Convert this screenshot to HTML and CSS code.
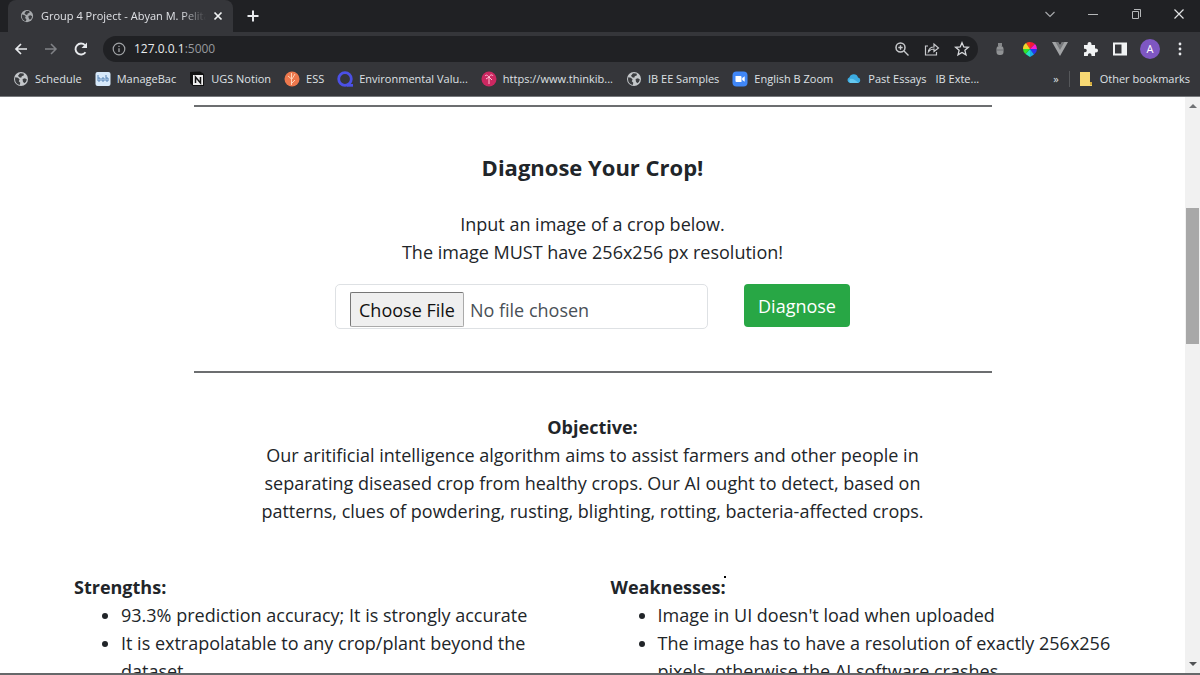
FILE: index.html
```html
<!DOCTYPE html>
<html lang="en">
<head>
<meta charset="utf-8">
<title>Group 4 Project</title>
<link rel="stylesheet" href="styles.css">
</head>
<body>
<svg class="defs" aria-hidden="true">
  <symbol id="globe" viewBox="0 0 16 16"><circle cx="8" cy="8" r="7" fill="#c4c7ca"/><path d="M2.3 6.2 5 6.8l1.6 1.6-.8 1.8 1.5 1.6-.5 2.3C3.8 13.5 2 11 2 8zM7 2.2l3.5.2.5 1.8-2.2 1-.6 1.6-2-.5-1.2-1.5zM9.6 8l2.3-.8 2 1.2-1 2.6-1.7 1.2-1.3-1.8z" fill="#3b3d40"/></symbol>
</svg>
<header class="chrome">
  <div class="tabstrip">
    <div class="tab">
      <svg class="icon dim"><use href="#globe"/></svg>
      <span class="tab-title">Group 4 Project - Abyan M. Pelita</span>
      <button class="plain" aria-label="Close tab"><svg viewBox="0 0 10 10" width="10" height="10"><path d="m1.5 1.5 7 7m0-7-7 7" stroke="#f1f3f4" stroke-width="1.7"/></svg></button>
    </div>
    <button class="plain new-tab" aria-label="New tab"><svg viewBox="0 0 12 12" width="12" height="12"><path d="M6 .5v11M.5 6h11" stroke="#e8eaed" stroke-width="2"/></svg></button>
    <div class="window-controls">
      <button class="plain" aria-label="Search tabs"><svg viewBox="0 0 12 12" width="12" height="12"><path d="m1.5 4 4.500 4.500L10.500 4" fill="none" stroke="#a6a8ab" stroke-width="1.200"/></svg></button>
      <button class="plain" aria-label="Minimize"><svg viewBox="0 0 12 12" width="12" height="12"><path d="M1 6.500h10" stroke="#b5b7b9"/></svg></button>
      <button class="plain" aria-label="Restore"><svg viewBox="0 0 12 12" width="12" height="12"><path d="M2.500 3.500h6v7h-6zM4 1.500h6.500V9" fill="none" stroke="#b5b7b9"/></svg></button>
      <button class="plain" aria-label="Close"><svg viewBox="0 0 12 12" width="12" height="12"><path d="m1.500 1.500 9 9m0-9-9 9" stroke="#e0e2e4" stroke-width="1.200"/></svg></button>
    </div>
  </div>
  <div class="toolbar">
    <button class="plain" aria-label="Back"><svg class="icon" viewBox="0 0 16 16"><path d="M14 8H3m5-5L3 8l5 5" fill="none" stroke="#e8eaed" stroke-width="1.700"/></svg></button>
    <button class="plain" aria-label="Forward"><svg class="icon" viewBox="0 0 16 16"><path d="M2 8h11M8 3l5 5-5 5" fill="none" stroke="#808286" stroke-width="1.500"/></svg></button>
    <button class="plain" aria-label="Reload"><svg class="icon" viewBox="0 0 16 16"><path d="M12.500 11.200A5.500 5.500 0 1 1 12 4.200" fill="none" stroke="#e8eaed" stroke-width="1.900"/><path d="M14 1.500V7H8.500z" fill="#e8eaed"/></svg></button>
    <div class="omnibox">
      <svg class="site-info" viewBox="0 0 14 14"><circle cx="7" cy="7" r="5.800" fill="none" stroke="#a0a3a6" stroke-width="1.200"/><path d="M7 6.200V10M7 3.800v1.300" stroke="#a0a3a6" stroke-width="1.300"/></svg>
      <span class="url">127.0.0.1<span class="port">:5000</span></span>
      <button class="plain" aria-label="Zoom"><svg class="icon" viewBox="0 0 16 16"><circle cx="6.500" cy="6.500" r="4.500" fill="none" stroke="#c8cacd" stroke-width="1.500"/><path d="m10 10 4.500 4.500M6.500 4.300v4.400M4.300 6.500h4.400" stroke="#c8cacd" stroke-width="1.400"/></svg></button>
      <button class="plain" aria-label="Share"><svg class="icon" viewBox="0 0 16 16"><path d="M4 5H1.500v9h11v-3M4.500 10.500c.5-3 2.500-4.500 5.500-4.500V3l4.500 4L10 10.500V8c-2.500 0-4 .8-5.500 2.500z" fill="none" stroke="#c8cacd" stroke-width="1.200"/></svg></button>
      <button class="plain" aria-label="Bookmark this page"><svg class="icon" viewBox="0 0 16 16"><path d="m8 1.700 1.800 4.200 4.600.4-3.500 3 1.100 4.500L8 11.400l-4 2.400 1.100-4.500-3.500-3 4.600-.4z" fill="none" stroke="#d8dadd" stroke-width="1.300"/></svg></button>
    </div>
    <div class="extensions">
      <button class="plain" aria-label="Extension"><svg class="icon" viewBox="0 0 16 16"><path d="M6 2h4v3H6z" fill="#858789"/><rect x="4.500" y="5" width="7" height="9" rx="3" fill="#919395"/><path d="M4.500 9h7" stroke="#6b6d70"/></svg></button>
      <button class="plain" aria-label="Color picker"><svg class="icon" viewBox="0 0 16 16"><path d="M8 8 4 2a7 7 0 0 1 4-1z" fill="#ff3b1f"/><path d="M8 8V1a7 7 0 0 1 5 2z" fill="#f21a38"/><path d="m8 8 5-5a7 7 0 0 1 2 5z" fill="#f51ed2"/><path d="M8 8h7a7 7 0 0 1-3 5.500z" fill="#2934ef"/><path d="m8 8 4 5.500L8 16z" fill="#18a9ed"/><path d="M8 8v8l-4.500-3z" fill="#24e5bd"/><path d="m8 8-4.500 5A7 7 0 0 1 1 8z" fill="#31e52c"/><path d="M8 8H1a7 7 0 0 1 3-6z" fill="#efd42b"/></svg></button>
      <button class="plain" aria-label="Vue devtools"><svg class="icon" viewBox="0 0 16 16"><path d="M0 1h6l2 3.500L10 1h6L8 15z" fill="#a2a4a6"/><path d="M3.500 1H6l2 3.500L10 1h2.500L8 9z" fill="#77797c"/></svg></button>
      <button class="plain" aria-label="Extensions"><svg class="icon" viewBox="0 0 16 16"><path d="M2 4h3.500V3a2 2 0 0 1 4 0v1H13v3.500h1a2 2 0 0 1 0 4h-1V15H9.500v-1a1.800 1.800 0 0 0-3.600 0v1H2v-3.700h1a1.800 1.800 0 0 0 0-3.600H2z" fill="#f1f3f4"/></svg></button>
      <button class="plain" aria-label="Side panel"><svg class="icon" viewBox="0 0 16 16"><path d="M2 2.500h12v11H2z" fill="none" stroke="#f1f3f4" stroke-width="2"/><path d="M9.500 2.500H14v11H9.500z" fill="#f1f3f4"/></svg></button>
      <button class="plain avatar" aria-label="Profile">A</button>
      <button class="plain" aria-label="Menu"><svg class="icon" viewBox="0 0 16 16"><g fill="#e8eaed"><circle cx="8" cy="3" r="1.400"/><circle cx="8" cy="8" r="1.400"/><circle cx="8" cy="13" r="1.400"/></g></svg></button>
    </div>
  </div>
  <nav class="bookmarks" aria-label="Bookmarks">
    <a href="#"><svg class="icon"><use href="#globe"/></svg>Schedule</a>
    <a href="#"><svg class="icon" viewBox="0 0 16 16"><rect x=".5" y="1" width="15" height="14" rx="2" fill="#d7e9fa"/><path d="M3 4v6m0-3h2v3H3m4-3h2v3H7zm4-3v6m0-3h2v3h-2" fill="none" stroke="#5683b5"/></svg>ManageBac</a>
    <a href="#"><svg class="icon" viewBox="0 0 16 16"><path d="m1 1 10-.5L15 3v12H4l-3-3z" fill="#111"/><path d="M4 4h10v10H4z" fill="#eee"/><path d="M6.500 12V6l5 6V6" fill="none" stroke="#111" stroke-width="1.500"/></svg>UGS Notion</a>
    <a href="#"><svg class="icon" viewBox="0 0 16 16"><circle cx="8" cy="8" r="7.500" fill="#ed784d"/><path d="M7.500 2v12M4 5l3.500 3M11 3 8 8m3 1-3 3" stroke="#ffd2b7" fill="none"/></svg>ESS</a>
    <a href="#"><svg class="icon" viewBox="0 0 16 16"><circle cx="8" cy="8" r="6.300" fill="none" stroke="#4b50e6" stroke-width="2.800"/><path d="M10 13h6v2.700h-6z" fill="#4b50e6"/></svg>Environmental Valu...</a>
    <a href="#"><svg class="icon" viewBox="0 0 16 16"><circle cx="8" cy="8" r="7.500" fill="#cb2861"/><path d="M8 13V5M4 5c2-2 3 0 4 1 1-2 3-3 4-1M5 8l3-2 3 3" stroke="#ffc2d6" fill="none"/></svg>https://www.thinkib...</a>
    <a href="#"><svg class="icon"><use href="#globe"/></svg>IB EE Samples</a>
    <a href="#"><svg class="icon" viewBox="0 0 16 16"><rect x=".5" y=".5" width="15" height="15" rx="4" fill="#4087f7"/><path d="M3.500 5h5a1 1 0 0 1 1 1v5h-5a1 1 0 0 1-1-1zM10.200 7l2.500-1.700v5.400L10.200 9z" fill="#fff"/></svg>English B Zoom</a>
    <a href="#"><svg class="icon" viewBox="0 0 16 16"><path d="M4 12a3 3 0 0 1-.5-5.800A4.500 4.500 0 0 1 12 6.500 2.900 2.900 0 0 1 12.500 12z" fill="#3cace2"/><path d="M4 12a3 3 0 0 1 0-4c3-1 5 1 8.500 4z" fill="#65c8ef"/></svg>Past Essays</a>
    <a href="#" class="no-icon">IB Exte...</a>
    <button class="plain more" aria-label="More bookmarks">»</button>
    <a href="#" class="other"><svg class="icon" viewBox="0 0 16 16"><path d="M2 1h10v10h2v4H2z" fill="#f7d873"/><path d="M12 11h2v3h-2z" fill="#d4ab3c"/></svg>Other bookmarks</a>
  </nav>
</header>
<div class="viewport">
  <main class="page">
    <hr>
    <section class="diagnose">
      <h1>Diagnose Your Crop!</h1>
      <p>Input an image of a crop below.<br>The image MUST have 256x256 px resolution!</p>
      <form>
        <input type="file" aria-label="Crop image">
        <button type="button">Diagnose</button>
      </form>
    </section>
    <hr>
    <section class="objective">
      <h2>Objective:</h2>
      <p>Our aritificial intelligence algorithm aims to assist farmers and other people in<br>separating diseased crop from healthy crops. Our AI ought to detect, based on<br>patterns, clues of powdering, rusting, blighting, rotting, bacteria-affected crops.</p>
    </section>
    <div class="columns">
      <section>
        <h2>Strengths:</h2>
        <ul>
          <li>93.3% prediction accuracy; It is strongly accurate</li>
          <li>It is extrapolatable to any crop/plant beyond the<br>dataset</li>
        </ul>
      </section>
      <section>
        <h2 class="pointed">Weaknesses:</h2>
        <ul>
          <li>Image in UI doesn't load when uploaded</li>
          <li>The image has to have a resolution of exactly 256x256<br>pixels, otherwise the AI software crashes</li>
        </ul>
      </section>
    </div>
  </main>
  <div class="scrollbar" aria-hidden="true">
    <svg viewBox="0 0 8 5" width="8" height="5"><path d="m0 5 4-4 4 4z" fill="#707275"/></svg>
    <div class="track"><div class="thumb"></div></div>
    <svg viewBox="0 0 8 5" width="8" height="5"><path d="m0 0 4 4 4-4z" fill="#505255"/></svg>
  </div>
</div>
</body>
</html>
```

FILE: styles.css
```css
* { box-sizing: border-box; }
body {
  margin: 0;
  height: 100vh;
  display: flex;
  flex-direction: column;
  overflow: hidden;
  background: #fff;
  color: #212529;
  font-family: "Open Sans", "Noto Sans", sans-serif;
  font-size: 18px;
  line-height: 28px;
}
.defs { position: absolute; width: 0; height: 0; }
.icon { display: block; width: 16px; height: 16px; flex: none; }
.dim { width: 14px; height: 14px; opacity: 0.8; }
.plain {
  display: flex;
  align-items: center;
  justify-content: center;
  padding: 0;
  border: 0;
  background: none;
  color: inherit;
  font: inherit;
}

/* Browser frame */
.chrome {
  flex: none;
  background: #35363a;
  border-bottom: 1px solid #77797c;
  color: #dfe1e5;
  font-size: 11px;
  line-height: 16px;
}
.tabstrip { display: flex; height: 32px; background: #202124; }
.tab {
  display: flex;
  align-items: center;
  gap: 7px;
  width: 225px;
  margin-left: 8px;
  padding: 0 10px 0 12px;
  border-radius: 8px 8px 0 0;
  background: #35363a;
}
.tab-title {
  flex: 1;
  overflow: hidden;
  white-space: nowrap;
  -webkit-mask-image: linear-gradient(to right, #000 85%, transparent);
  mask-image: linear-gradient(to right, #000 85%, transparent);
}
.new-tab { width: 40px; }
.window-controls { display: flex; gap: 31px; margin-left: auto; padding: 0 15px 4px 0; }
.toolbar { display: flex; align-items: center; gap: 14px; height: 34px; padding: 0 12px 0 13px; }
.omnibox {
  flex: 1;
  display: flex;
  align-items: center;
  gap: 14px;
  height: 26px;
  padding: 0 8px 0 9px;
  border-radius: 13px;
  background: #202124;
}
.site-info { width: 14px; height: 14px; margin-right: -6px; }
.url { flex: 1; font-size: 12px; color: #e8eaed; }
.port { color: #96999d; }
.extensions { display: flex; align-items: center; gap: 14px; }
.avatar { width: 20px; height: 20px; margin: 0 -2px; border-radius: 50%; background: #7e57c2; color: #fff; }
.bookmarks { display: flex; align-items: center; gap: 13px; height: 30px; padding: 0 10px 4px 13px; }
.bookmarks a { display: flex; align-items: center; gap: 6px; color: inherit; text-decoration: none; white-space: nowrap; }
.bookmarks .no-icon { margin-left: -4px; }
.more { margin-left: auto; margin-right: -3px; }
.bookmarks .other { padding-left: 8px; border-left: 1px solid #55575a; }

/* Page */
.viewport { flex: 1; min-height: 0; display: flex; border-bottom: 2px solid #66686a; }
.page { flex: 1; overflow: hidden; padding-top: 8px; }
h1, h2, p, ul { margin: 0; font-size: 18px; }
h2 { line-height: 28px; }
hr { width: 90%; max-width: 798px; height: 2px; margin: 0 auto; border: 0; background: #6c6e70; }
.diagnose { padding: 46px 16px 42px; text-align: center; }
h1 { margin-bottom: 29px; font-size: 22px; line-height: 28px; }
form { display: flex; justify-content: center; gap: 36px; margin-top: 18px; }
input[type="file"] {
  width: 373px;
  height: 45px;
  padding: 7px 14px;
  border: 1px solid #dee1e4;
  border-radius: 5px;
  color: #495057;
  font: inherit;
}
input[type="file"]::file-selector-button {
  height: 35px;
  margin: 0 6px 0 0;
  padding: 0 8px;
  border: 1px solid #aaa;
  border-radius: 2px;
  border-top-color: #767676;
  border-left-color: #767676;
  background: #efefef;
  color: #111;
  font: inherit;
}
form button {
  height: 43px;
  padding: 0 14px;
  border: 0;
  border-radius: 4px;
  background: #28a745;
  color: #fff;
  font: inherit;
}
.objective { padding: 40px 16px 48px; text-align: center; }
.columns { display: grid; grid-template-columns: 1fr 1fr; padding: 0 56px; }
.columns section { min-width: 0; padding: 0 18px; white-space: nowrap; }
ul { padding-left: 47px; }
.pointed { position: relative; width: max-content; }
.pointed::after { content: ""; position: absolute; top: 3px; right: 0; width: 2px; height: 2px; background: #000; }
.scrollbar {
  flex: none;
  display: flex;
  flex-direction: column;
  align-items: center;
  width: 15px;
  padding: 6px 0;
  background: #f1f1f1;
}
.track { flex: 1; align-self: stretch; padding: 100px 1px 0; }
.thumb { height: 136px; background: #a8a8a8; }
```
